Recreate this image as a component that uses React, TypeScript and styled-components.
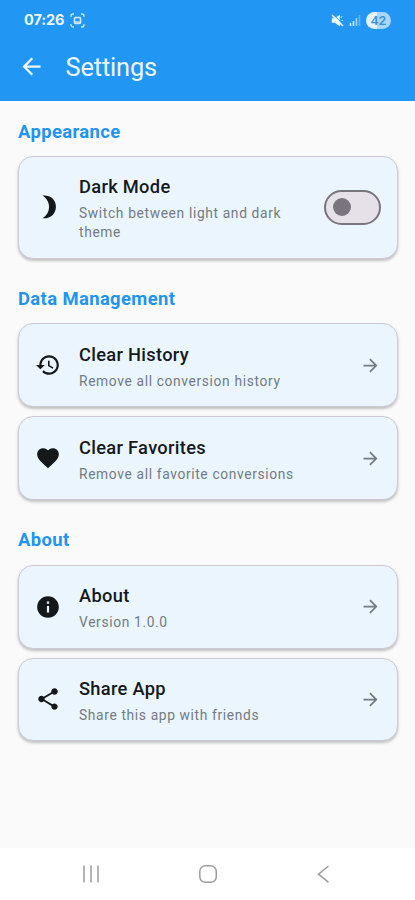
import React from "react";
import styled, { createGlobalStyle } from "styled-components";

const Global = createGlobalStyle`
  * { box-sizing: border-box; }
  body { margin: 0; background: #fafafa; }
`;

const Screen = styled.div`
  width: 415px;
  height: 900px;
  display: flex;
  flex-direction: column;
  background: #fafafa;
  font-family: Roboto, "Liberation Sans", sans-serif;
  overflow: hidden;
`;

const Header = styled.header`
  height: 100.5px;
  flex: none;
  background: #2196f3;
  color: #eef7ff;
`;

const StatusBar = styled.div`
  height: 40px;
  padding: 0 24px 0 24px;
  display: flex;
  align-items: center;
`;

const Clock = styled.span`
  font-family: Inter, Roboto, sans-serif;
  font-size: 14.5px;
  font-weight: 700;
  line-height: 20px;
  letter-spacing: -0.1px;
  margin-right: 6px;
`;

const StatusIcons = styled.div`
  margin-left: auto;
  display: flex;
  align-items: center;
  gap: 5px;
`;

const Battery = styled.span`
  width: 25px;
  height: 17px;
  border-radius: 9px;
  background: linear-gradient(90deg, #e3f2fe 42%, #a9d6fa 42%);
  color: #3c8fd3;
  font-size: 13.5px;
  font-weight: 500;
  line-height: 17px;
  text-align: center;
`;

const AppBar = styled.div`
  height: 53px;
  padding-left: 17.5px;
  display: flex;
  align-items: center;
  gap: 21px;
`;

const PageTitle = styled.h1`
  margin: 0;
  font-size: 25.4px;
  line-height: 32px;
  font-weight: 400;
  letter-spacing: -0.15px;
`;

const Content = styled.main`
  flex: 1;
  padding: 20px 17.5px 0 18px;
`;

const Section = styled.section`
  margin-bottom: 29.4px;
`;

const SectionTitle = styled.h2`
  margin: 0 0 13.3px;
  height: 22px;
  font-size: 18.4px;
  line-height: 22px;
  font-weight: 700;
  letter-spacing: 0.4px;
  color: #2094ee;
`;

const CardList = styled.div`
  display: flex;
  flex-direction: column;
  gap: 9px;
`;

const Card = styled.div<{ $tall?: boolean }>`
  height: ${(p) => (p.$tall ? 103 : 83.8)}px;
  padding: 0 16px;
  display: flex;
  align-items: center;
  border: 1.2px solid #cdcad6;
  border-radius: 15px;
  background: #eaf5fe;
  box-shadow: 0 2px 3px rgba(0, 0, 0, 0.24);
`;

const CardIcon = styled.svg`
  width: 26px;
  height: 26px;
  flex: none;
  margin-right: 18px;
  fill: #14181b;
`;

const CardText = styled.div`
  flex: 1;
  padding-top: 1px;
`;

const CardTitle = styled.div`
  font-size: 18.3px;
  line-height: 28px;
  font-weight: 500;
  letter-spacing: 0.3px;
  color: #15191c;
`;

const CardSubtitle = styled.div`
  max-width: 225px;
  margin-top: 3px;
  font-size: 13.8px;
  line-height: 19px;
  letter-spacing: 0.64px;
  color: #747b81;
`;

const Arrow = styled.svg`
  width: 21px;
  height: 21px;
  flex: none;
  fill: #747c82;
`;

const Switch = styled.div`
  width: 57px;
  height: 35px;
  flex: none;
  padding-left: 7px;
  display: flex;
  align-items: center;
  border: 2px solid #79747e;
  border-radius: 18px;
  background: #e6e0e9;
`;

const Thumb = styled.div`
  width: 18px;
  height: 18px;
  border-radius: 50%;
  background: #79747e;
`;

const NavBar = styled.nav`
  height: 52px;
  flex: none;
  padding: 0 85px 0 81px;
  display: flex;
  align-items: center;
  justify-content: space-between;
  background: #fff;
`;

const LineIcon = styled.svg`
  fill: none;
  stroke: #9c9c9c;
  stroke-width: 1.5;
`;

const paths = {
  moon: "M6.800 1.400C14 0.600 19.300 5 19.300 11.700C19.300 18.600 13.700 23.200 7 22.400C11 19.800 13 16.200 13 12C13 7.700 10.700 3.800 6.800 1.400Z",
  history:
    "M13 3c-4.970 0-9 4.030-9 9H1l3.890 3.890.070.140L9 12H6c0-3.870 3.130-7 7-7s7 3.130 7 7-3.130 7-7 7c-1.930 0-3.680-.790-4.940-2.060l-1.420 1.420C8.270 19.990 10.510 21 13 21c4.970 0 9-4.030 9-9s-4.030-9-9-9zm-1 5v5l4.280 2.540.720-1.210-3.500-2.080V8H12z",
  heart:
    "M12 21.350l-1.450-1.320C5.400 15.360 2 12.280 2 8.500 2 5.420 4.420 3 7.500 3c1.740 0 3.410.810 4.500 2.090C13.090 3.810 14.760 3 16.500 3 19.580 3 22 5.420 22 8.500c0 3.780-3.400 6.860-8.550 11.540L12 21.350z",
  info: "M12 2C6.480 2 2 6.480 2 12s4.480 10 10 10 10-4.480 10-10S17.520 2 12 2zm1 15h-2v-6h2v6zm0-8h-2V7h2v2z",
  share:
    "M18 16.080c-.760 0-1.440.300-1.960.770L8.910 12.700c.050-.230.090-.460.090-.700s-.040-.470-.090-.700l7.050-4.110c.540.500 1.250.810 2.040.810 1.660 0 3-1.340 3-3s-1.340-3-3-3-3 1.340-3 3c0 .240.040.470.090.700L8.040 9.810C7.500 9.310 6.790 9 6 9c-1.660 0-3 1.340-3 3s1.340 3 3 3c.790 0 1.500-.310 2.040-.810l7.120 4.160c-.050.210-.080.430-.080.650 0 1.610 1.310 2.920 2.920 2.920s2.920-1.310 2.920-2.920-1.310-2.920-2.920-2.920z",
  forward: "M12 4l-1.410 1.410L16.170 11H4v2h12.170l-5.580 5.590L12 20l8-8z",
  back: "M20 11H7.830l5.590-5.590L12 4l-8 8 8 8 1.410-1.410L7.830 13H20v-2z",
};

type SettingProps = {
  icon: keyof typeof paths;
  title: string;
  subtitle: string;
  toggle?: boolean;
};

function Setting({ icon, title, subtitle, toggle }: SettingProps) {
  return (
    <Card $tall={toggle}>
      <CardIcon viewBox="0 0 24 24">
        <path d={paths[icon]} />
      </CardIcon>
      <CardText>
        <CardTitle>{title}</CardTitle>
        <CardSubtitle>{subtitle}</CardSubtitle>
      </CardText>
      {toggle ? (
        <Switch role="switch" aria-checked={false}>
          <Thumb />
        </Switch>
      ) : (
        <Arrow viewBox="0 0 24 24">
          <path d={paths.forward} />
        </Arrow>
      )}
    </Card>
  );
}

export default function App() {
  return (
    <Screen>
      <Global />
      <Header>
        <StatusBar>
          <Clock>07:26</Clock>
          <svg width="15" height="15" viewBox="0 0 15 15" fill="none" stroke="#d5ecfe" strokeWidth="1.3">
            <path d="M1 4V3a2 2 0 0 1 2-2h1M11 1h1a2 2 0 0 1 2 2v1M14 11v1a2 2 0 0 1-2 2h-1M4 14H3a2 2 0 0 1-2-2v-1" />
            <rect x="4.500" y="4.500" width="6" height="6" rx="1" strokeWidth="1.600" />
            <path d="M5 9h5" />
          </svg>
          <StatusIcons>
            <svg width="13" height="13" viewBox="0 0 13 13">
              <path d="M0.800 4.300h2.700L8.800 0.800v11.500L3.500 8.700H0.800z" fill="#eef8ff" />
              <path d="M10 4l1-2M10.500 6.500H12" stroke="#cfe8fd" />
              <path d="M2.300 0.500l10 10" stroke="#2196f3" strokeWidth="1" />
              <path d="M1 1l11 11" stroke="#eef8ff" strokeWidth="1.600" />
            </svg>
            <svg width="12" height="12" viewBox="0 0 12 12">
              <path d="M1.500 12V9M4.500 12V7" stroke="#d8edfe" strokeWidth="1.600" />
              <path d="M7.500 12V4" stroke="#a9d6fb" strokeWidth="1.600" />
              <path d="M10.500 12V1" stroke="#65b5f7" strokeWidth="1.600" />
            </svg>
            <Battery>42</Battery>
          </StatusIcons>
        </StatusBar>
        <AppBar>
          <svg width="27" height="27" viewBox="0 0 24 24" fill="#eef7ff">
            <path d={paths.back} />
          </svg>
          <PageTitle>Settings</PageTitle>
        </AppBar>
      </Header>
      <Content>
        <Section>
          <SectionTitle>Appearance</SectionTitle>
          <CardList>
            <Setting icon="moon" title="Dark Mode" subtitle="Switch between light and dark theme" toggle />
          </CardList>
        </Section>
        <Section>
          <SectionTitle>Data Management</SectionTitle>
          <CardList>
            <Setting icon="history" title="Clear History" subtitle="Remove all conversion history" />
            <Setting icon="heart" title="Clear Favorites" subtitle="Remove all favorite conversions" />
          </CardList>
        </Section>
        <Section>
          <SectionTitle>About</SectionTitle>
          <CardList>
            <Setting icon="info" title="About" subtitle="Version 1.0.0" />
            <Setting icon="share" title="Share App" subtitle="Share this app with friends" />
          </CardList>
        </Section>
      </Content>
      <NavBar>
        <LineIcon width="20" height="20" viewBox="0 0 20 20">
          <path d="M3 1.500v17M10 1.500v17M17 1.500v17" />
        </LineIcon>
        <LineIcon width="20" height="20" viewBox="0 0 20 20">
          <rect x="0.800" y="1.800" width="16.500" height="16.500" rx="5.500" />
        </LineIcon>
        <LineIcon width="14" height="20" viewBox="0 0 14 20">
          <path d="M12.500 2L2.500 10.200l10 8.200" />
        </LineIcon>
      </NavBar>
    </Screen>
  );
}
